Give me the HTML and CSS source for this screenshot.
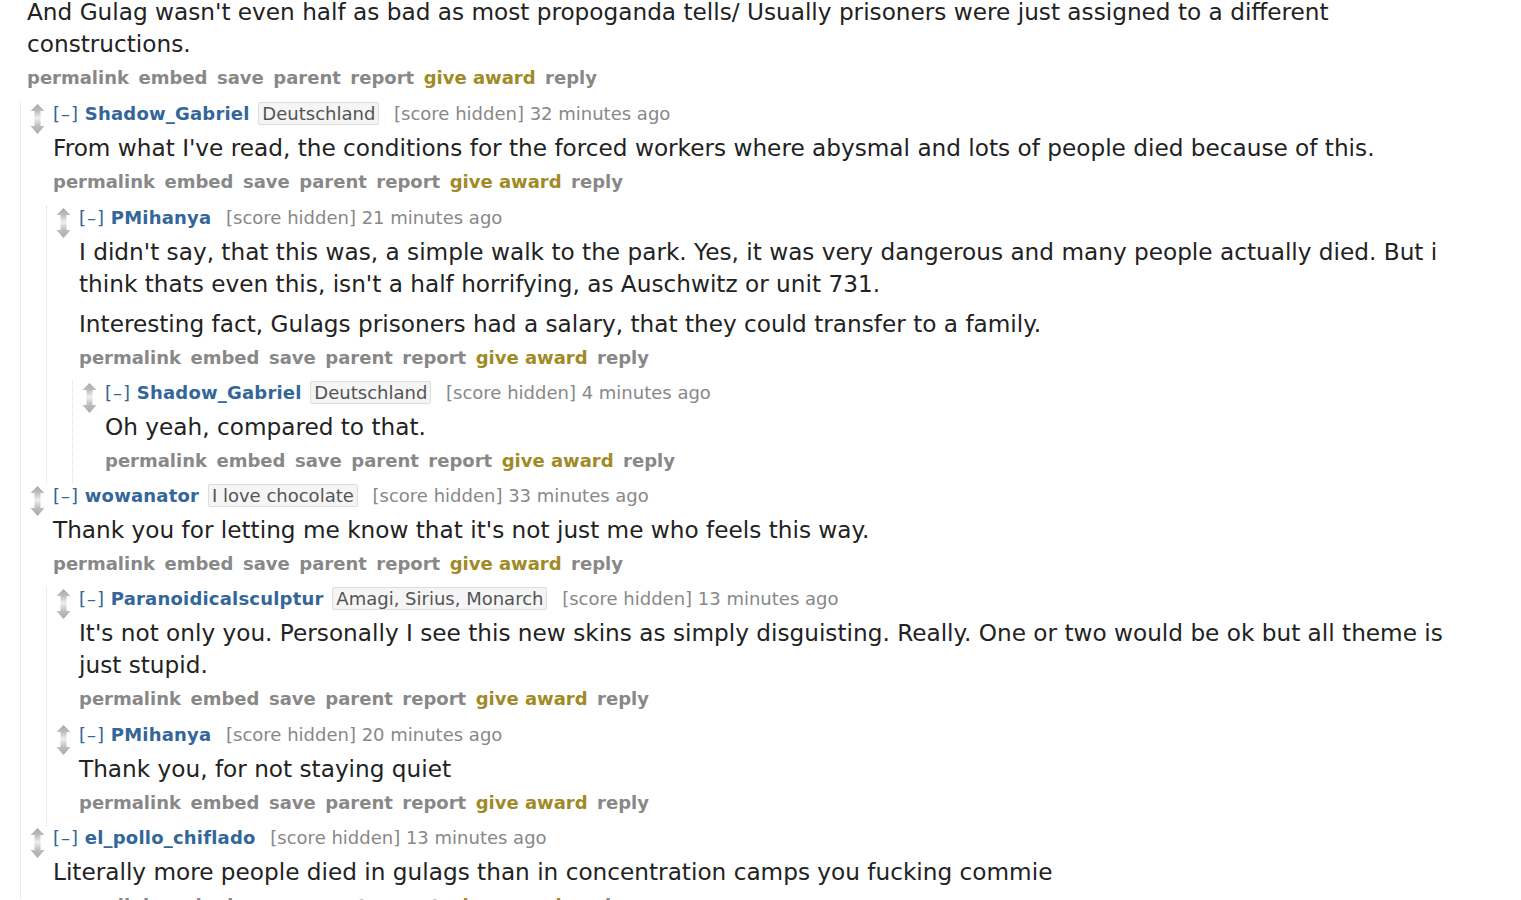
FILE: index.html
```html
<!DOCTYPE html>
<html lang="en">
<head>
  <meta charset="UTF-8">
  <title>comments</title>
  <link rel="stylesheet" href="styles.css">
</head>
<body>
  <svg width="0" height="0" class="defs">
    <defs>
      <linearGradient id="gUp" x1="0" y1="0" x2="0" y2="1">
        <stop offset="0" stop-color="#a8a8a8"/>
        <stop offset="0.5" stop-color="#bdbdbd"/>
        <stop offset="1" stop-color="#efefef"/>
      </linearGradient>
      <linearGradient id="gDown" x1="0" y1="0" x2="0" y2="1">
        <stop offset="0" stop-color="#efefef"/>
        <stop offset="0.5" stop-color="#bdbdbd"/>
        <stop offset="1" stop-color="#a8a8a8"/>
      </linearGradient>
    </defs>
  </svg>

  <div class="commentarea">

    <div class="comment">
      <div class="midcol"></div>
      <div class="entry">
        <div class="md top">
          <p>And Gulag wasn't even half as bad as most propoganda tells/ Usually prisoners were just assigned to a different constructions.</p>
        </div>
        <ul class="buttons">
          <li>permalink</li><li>embed</li><li>save</li><li>parent</li><li>report</li><li class="award">give award</li><li>reply</li>
        </ul>
      </div>

      <div class="child">

        <div class="comment">
          <div class="midcol">
            <svg class="arrow" width="15" height="14" viewBox="0 0 15 14"><polygon points="7.5,0 14.5,7 10.5,7 10.5,14 4.5,14 4.5,7 0.5,7" fill="url(#gUp)"/></svg>
            <svg class="arrow" width="15" height="16" viewBox="0 0 15 16"><polygon points="4.5,0 10.5,0 10.5,8 14.5,8 7.5,16 0.5,8 4.5,8" fill="url(#gDown)"/></svg>
          </div>
          <div class="entry">
            <p class="tagline"><span class="expand">[–]</span> <span class="author">Shadow_Gabriel</span> <span class="flair">Deutschland</span> <span class="score">[score hidden] 32 minutes ago</span></p>
            <div class="md">
              <p>From what I've read, the conditions for the forced workers where abysmal and lots of people died because of this.</p>
            </div>
            <ul class="buttons">
              <li>permalink</li><li>embed</li><li>save</li><li>parent</li><li>report</li><li class="award">give award</li><li>reply</li>
            </ul>
          </div>

          <div class="child">
            <div class="comment">
              <div class="midcol">
                <svg class="arrow" width="15" height="14" viewBox="0 0 15 14"><polygon points="7.5,0 14.5,7 10.5,7 10.5,14 4.5,14 4.5,7 0.5,7" fill="url(#gUp)"/></svg>
                <svg class="arrow" width="15" height="16" viewBox="0 0 15 16"><polygon points="4.5,0 10.5,0 10.5,8 14.5,8 7.5,16 0.5,8 4.5,8" fill="url(#gDown)"/></svg>
              </div>
              <div class="entry">
                <p class="tagline"><span class="expand">[–]</span> <span class="author">PMihanya</span> <span class="score">[score hidden] 21 minutes ago</span></p>
                <div class="md">
                  <p>I didn't say, that this was, a simple walk to the park. Yes, it was very dangerous and many people actually died. But i think thats even this, isn't a half horrifying, as Auschwitz or unit 731.</p>
                  <p>Interesting fact, Gulags prisoners had a salary, that they could transfer to a family.</p>
                </div>
                <ul class="buttons">
                  <li>permalink</li><li>embed</li><li>save</li><li>parent</li><li>report</li><li class="award">give award</li><li>reply</li>
                </ul>
              </div>

              <div class="child">
                <div class="comment">
                  <div class="midcol">
                    <svg class="arrow" width="15" height="14" viewBox="0 0 15 14"><polygon points="7.5,0 14.5,7 10.5,7 10.5,14 4.5,14 4.5,7 0.5,7" fill="url(#gUp)"/></svg>
                    <svg class="arrow" width="15" height="16" viewBox="0 0 15 16"><polygon points="4.5,0 10.5,0 10.5,8 14.5,8 7.5,16 0.5,8 4.5,8" fill="url(#gDown)"/></svg>
                  </div>
                  <div class="entry">
                    <p class="tagline"><span class="expand">[–]</span> <span class="author">Shadow_Gabriel</span> <span class="flair">Deutschland</span> <span class="score">[score hidden] 4 minutes ago</span></p>
                    <div class="md">
                      <p>Oh yeah, compared to that.</p>
                    </div>
                    <ul class="buttons">
                      <li>permalink</li><li>embed</li><li>save</li><li>parent</li><li>report</li><li class="award">give award</li><li>reply</li>
                    </ul>
                  </div>
                </div>
              </div>
            </div>
          </div>
        </div>

        <div class="comment">
          <div class="midcol">
            <svg class="arrow" width="15" height="14" viewBox="0 0 15 14"><polygon points="7.5,0 14.5,7 10.5,7 10.5,14 4.5,14 4.5,7 0.5,7" fill="url(#gUp)"/></svg>
            <svg class="arrow" width="15" height="16" viewBox="0 0 15 16"><polygon points="4.5,0 10.5,0 10.5,8 14.5,8 7.5,16 0.5,8 4.5,8" fill="url(#gDown)"/></svg>
          </div>
          <div class="entry">
            <p class="tagline"><span class="expand">[–]</span> <span class="author">wowanator</span> <span class="flair">I love chocolate</span> <span class="score">[score hidden] 33 minutes ago</span></p>
            <div class="md">
              <p>Thank you for letting me know that it's not just me who feels this way.</p>
            </div>
            <ul class="buttons">
              <li>permalink</li><li>embed</li><li>save</li><li>parent</li><li>report</li><li class="award">give award</li><li>reply</li>
            </ul>
          </div>

          <div class="child">
            <div class="comment">
              <div class="midcol">
                <svg class="arrow" width="15" height="14" viewBox="0 0 15 14"><polygon points="7.5,0 14.5,7 10.5,7 10.5,14 4.5,14 4.5,7 0.5,7" fill="url(#gUp)"/></svg>
                <svg class="arrow" width="15" height="16" viewBox="0 0 15 16"><polygon points="4.5,0 10.5,0 10.5,8 14.5,8 7.5,16 0.5,8 4.5,8" fill="url(#gDown)"/></svg>
              </div>
              <div class="entry">
                <p class="tagline"><span class="expand">[–]</span> <span class="author">Paranoidicalsculptur</span> <span class="flair">Amagi, Sirius, Monarch</span> <span class="score">[score hidden] 13 minutes ago</span></p>
                <div class="md">
                  <p>It's not only you. Personally I see this new skins as simply disguisting. Really. One or two would be ok but all theme is just stupid.</p>
                </div>
                <ul class="buttons">
                  <li>permalink</li><li>embed</li><li>save</li><li>parent</li><li>report</li><li class="award">give award</li><li>reply</li>
                </ul>
              </div>
            </div>

            <div class="comment">
              <div class="midcol">
                <svg class="arrow" width="15" height="14" viewBox="0 0 15 14"><polygon points="7.5,0 14.5,7 10.5,7 10.5,14 4.5,14 4.5,7 0.5,7" fill="url(#gUp)"/></svg>
                <svg class="arrow" width="15" height="16" viewBox="0 0 15 16"><polygon points="4.5,0 10.5,0 10.5,8 14.5,8 7.5,16 0.5,8 4.5,8" fill="url(#gDown)"/></svg>
              </div>
              <div class="entry">
                <p class="tagline"><span class="expand">[–]</span> <span class="author">PMihanya</span> <span class="score">[score hidden] 20 minutes ago</span></p>
                <div class="md">
                  <p>Thank you, for not staying quiet</p>
                </div>
                <ul class="buttons">
                  <li>permalink</li><li>embed</li><li>save</li><li>parent</li><li>report</li><li class="award">give award</li><li>reply</li>
                </ul>
              </div>
            </div>
          </div>
        </div>

        <div class="comment">
          <div class="midcol">
            <svg class="arrow" width="15" height="14" viewBox="0 0 15 14"><polygon points="7.5,0 14.5,7 10.5,7 10.5,14 4.5,14 4.5,7 0.5,7" fill="url(#gUp)"/></svg>
            <svg class="arrow" width="15" height="16" viewBox="0 0 15 16"><polygon points="4.5,0 10.5,0 10.5,8 14.5,8 7.5,16 0.5,8 4.5,8" fill="url(#gDown)"/></svg>
          </div>
          <div class="entry">
            <p class="tagline"><span class="expand">[–]</span> <span class="author">el_pollo_chiflado</span> <span class="score">[score hidden] 13 minutes ago</span></p>
            <div class="md">
              <p>Literally more people died in gulags than in concentration camps you fucking commie</p>
            </div>
            <ul class="buttons">
              <li>permalink</li><li>embed</li><li>save</li><li>parent</li><li>report</li><li class="award">give award</li><li>reply</li>
            </ul>
          </div>
        </div>

      </div>
    </div>

  </div>
</body>
</html>
```

FILE: styles.css
```css
html,
body {
  margin: 0;
  overflow: hidden;
  background-color: #fff;
}

body {
  font-family: 'DejaVu Sans', Verdana, sans-serif;
  color: #222;
}

.defs {
  position: absolute;
}

.commentarea {
  padding: 0 46px 0 1px;
  margin-top: -4px;
}

.comment {
  display: grid;
  grid-template-columns: 26px 1fr;
}

.midcol {
  display: flex;
  flex-direction: column;
  padding: 2px 0 0 3px;
}

.arrow {
  display: block;
}

.entry {
  min-width: 0;
  padding-bottom: 11.3px;
}

.md.top + .buttons {
  margin-bottom: 1px;
}

.child {
  grid-column: 1 / 3;
  margin-left: 19px;
  padding-left: 6px;
  border-left: 1px dotted #d8d8f2;
}

.tagline {
  margin: 0;
  font-size: 18px;
  line-height: 24px;
  color: #888;
  white-space: nowrap;
}

.expand {
  color: #369;
  letter-spacing: 1px;
}

.author {
  color: #369;
  font-weight: bold;
  letter-spacing: 0.2px;
}

.flair {
  margin-left: 3px;
  padding: 0 3px;
  background-color: #f5f5f5;
  border: 1px solid #ddd;
  border-radius: 2px;
  color: #545454;
}

.score {
  margin-left: 9px;
}

.md {
  margin: 6px 0;
  font-size: 23.2px;
  line-height: 32px;
}

.md.top {
  margin-top: 0;
}

.md p {
  margin: 0;
}

.md p + p {
  margin-top: 8px;
}

.buttons {
  display: flex;
  gap: 9.5px;
  list-style: none;
  margin: 0;
  padding: 0;
  font-size: 18px;
  line-height: 24px;
  font-weight: bold;
  color: #888;
}

.award {
  color: #a08a26;
}
```
